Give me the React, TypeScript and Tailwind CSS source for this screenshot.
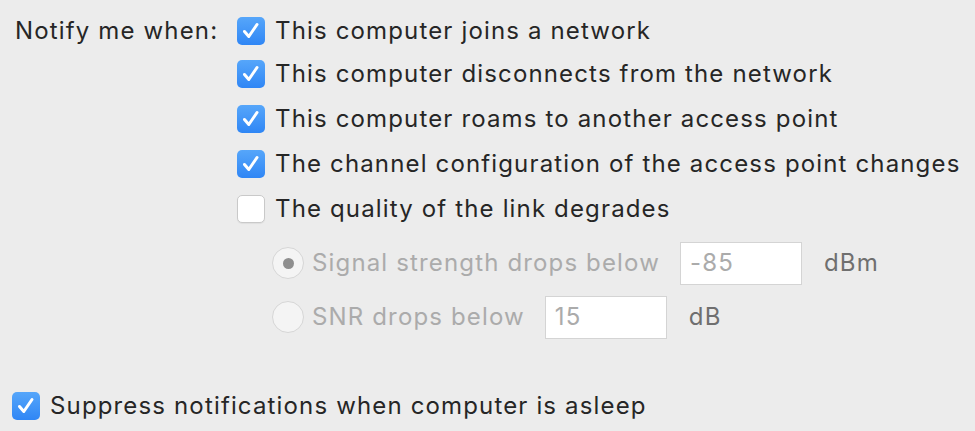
import React from 'react'

const FONT = 'font-["Inter","Noto_Sans",sans-serif] tracking-[1.15px]'

function Check({ on }: { on: boolean }) {
  if (!on) {
    return <span className="block w-[28px] h-[28px] shrink-0 rounded-[5px] bg-white border border-[#c9c9c9] shadow-[0_1px_1px_rgba(0,0,0,0.06)]" />
  }
  return (
    <span className="flex w-[28px] h-[28px] shrink-0 items-center justify-center rounded-[5px] bg-gradient-to-b from-[#56a6fa] to-[#2f86f5]">
      <svg width="20" height="20" viewBox="0 0 20 20" fill="none">
        <path d="M3.5 10.5 L7.8 15.5 L16 3.5" stroke="#fff" strokeWidth="3" strokeLinecap="round" strokeLinejoin="round" />
      </svg>
    </span>
  )
}

function Radio({ on }: { on: boolean }) {
  return (
    <span className="flex w-[32px] h-[32px] shrink-0 items-center justify-center rounded-full bg-[#f4f4f4] border border-[#d6d6d6]">
      {on && <span className="block w-[11px] h-[11px] rounded-full bg-[#8e8e8e]" />}
    </span>
  )
}

const items = [
  { text: 'This computer joins a network', on: true, h: 'h-[42px]' },
  { text: 'This computer disconnects from the network', on: true, h: 'h-[44px]' },
  { text: 'This computer roams to another access point', on: true, h: 'h-[45px]' },
  { text: 'The channel configuration of the access point changes', on: true, h: 'h-[45px]' },
  { text: 'The quality of the link degrades', on: false, h: 'h-[45px]' },
]

export default function App() {
  return (
    <div className={`w-[975px] h-[431px] overflow-hidden bg-[#ececec] text-[24px] text-[#262626] ${FONT}`}>
      <div className="flex pt-[10px] pl-[15px]">
        <div className="w-[222px] h-[42px] flex items-center">Notify me when:</div>
        <div className="flex flex-col">
          {items.map((it) => (
            <div key={it.text} className={`flex items-center gap-[10px] ${it.h}`}>
              <Check on={it.on} />
              <span className="whitespace-nowrap">{it.text}</span>
            </div>
          ))}
          <div className="flex flex-col mt-[5px] pl-[35px] text-[#ababab]">
            <div className="flex items-center h-[54px]">
              <Radio on={true} />
              <span className="ml-[8px] whitespace-nowrap">Signal strength drops below</span>
              <span className="ml-[20px] flex items-center w-[122px] h-[43px] bg-white border border-[#d4d4d4] pl-[9px]">-85</span>
              <span className="ml-[22px] text-[#6f6f6f]">dBm</span>
            </div>
            <div className="flex items-center h-[54px]">
              <Radio on={false} />
              <span className="ml-[8px] whitespace-nowrap">SNR drops below</span>
              <span className="ml-[20px] flex items-center w-[122px] h-[43px] bg-white border border-[#d4d4d4] pl-[9px]">15</span>
              <span className="ml-[22px] text-[#6f6f6f]">dB</span>
            </div>
          </div>
        </div>
      </div>
      <div className="flex items-center gap-[10px] h-[44px] mt-[40px] pl-[12px]">
        <Check on={true} />
        <span className="whitespace-nowrap">Suppress notifications when computer is asleep</span>
      </div>
    </div>
  )
}
